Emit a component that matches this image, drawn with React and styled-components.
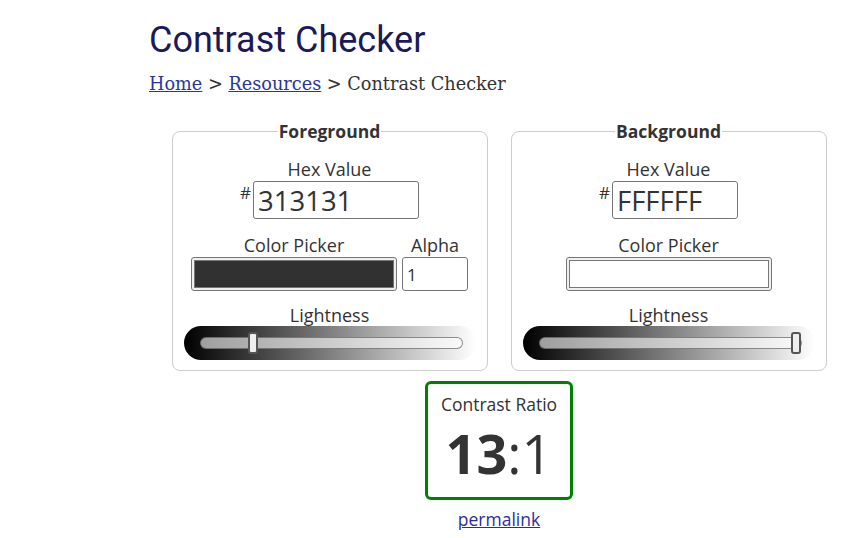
import React from "react";
import styled, { createGlobalStyle } from "styled-components";

const GlobalStyle = createGlobalStyle`
  body {
    margin: 0;
    background: #fff;
    font-family: "Open Sans", "Liberation Sans", sans-serif;
    color: #333;
  }
`;

const Page = styled.main`
  width: 700px;
  margin-left: 149px;
  padding-top: 16px;
`;

const Title = styled.h1`
  margin: 0;
  font-family: Roboto, "Liberation Sans", sans-serif;
  font-weight: 400;
  font-size: 36px;
  line-height: 48px;
  color: #1b1a57;
`;

const Crumbs = styled.nav`
  margin-top: 8px;
  font-family: "DejaVu Serif", "Liberation Serif", serif;
  font-size: 17.7px;
  line-height: 24px;
  color: #333;
`;

const CrumbLink = styled.a`
  color: #27379b;
  text-decoration: underline;
`;

const Panels = styled.div`
  display: flex;
  justify-content: center;
  gap: 23px;
  margin-top: 23px;
`;

const Panel = styled.fieldset`
  width: 316px;
  box-sizing: border-box;
  margin: 0;
  padding: 14px 11px 10px;
  border: 1px solid #ccc;
  border-radius: 8px;
  display: flex;
  flex-direction: column;
  align-items: center;
`;

const Legend = styled.legend`
  margin: 0 auto;
  padding: 0 1px;
  font-weight: 700;
  font-size: 17.5px;
  line-height: 24px;
  color: #333;
`;

const Label = styled.div`
  font-size: 18px;
  line-height: 24px;
  text-align: center;
  color: #333;
`;

const HexRow = styled.div`
  display: flex;
  align-items: flex-start;
`;

const Hash = styled.span`
  font-size: 17px;
  line-height: 17px;
  margin-top: 3px;
  margin-right: 2px;
`;

const HexInput = styled.input`
  width: ${(p) => p.$w}px;
  height: 38px;
  box-sizing: border-box;
  border: 1px solid #767676;
  border-radius: 3px;
  padding: 0 4px;
  font-family: "Open Sans", "Liberation Sans", sans-serif;
  font-size: 27.5px;
  color: #333;
  outline: none;
`;

const PickRow = styled.div`
  display: flex;
  gap: 5px;
  margin-top: 14px;
`;

const Column = styled.div`
  display: flex;
  flex-direction: column;
  align-items: center;
`;

const ColorInput = styled.input`
  width: 206px;
  height: 34px;
  box-sizing: border-box;
  padding: 2px;
  border: 1px solid #767676;
  border-radius: 3px;
  background: #efefef;
  cursor: pointer;
  &::-webkit-color-swatch-wrapper {
    padding: 0;
  }
  &::-webkit-color-swatch {
    border: 1px solid #777;
    border-radius: 0;
  }
`;

const AlphaInput = styled.input`
  width: 66px;
  height: 34px;
  box-sizing: border-box;
  border: 1px solid #767676;
  border-radius: 3px;
  padding: 0 4px;
  font-family: "Open Sans", "Liberation Sans", sans-serif;
  font-size: 17px;
  color: #333;
`;

const LightBlock = styled.div`
  margin-top: 12px;
  align-self: stretch;
  display: flex;
  flex-direction: column;
  align-items: center;
`;

const Gradient = styled.div`
  align-self: stretch;
  height: 34px;
  margin-top: -1px;
  border-radius: 17px;
  background: linear-gradient(to right, #000 0%, #fff 100%);
  display: flex;
  align-items: center;
  padding: 0 13px 0 16px;
`;

const Range = styled.input`
  -webkit-appearance: none;
  appearance: none;
  width: 100%;
  height: 24px;
  margin: 0;
  background: transparent;
  &::-webkit-slider-runnable-track {
    height: 12px;
    box-sizing: border-box;
    border: 1px solid rgba(70, 70, 70, 0.6);
    border-radius: 6px;
    background: rgba(255, 255, 255, 0.6);
  }
  &::-webkit-slider-thumb {
    -webkit-appearance: none;
    width: 10px;
    height: 22px;
    margin-top: -6px;
    box-sizing: border-box;
    background: #eee;
    border: 2px solid #555;
    border-radius: 3px;
  }
`;

const Result = styled.section`
  display: flex;
  flex-direction: column;
  align-items: center;
  margin-top: 10px;
`;

const RatioBox = styled.div`
  width: 148px;
  height: 119px;
  box-sizing: border-box;
  border: 3px solid #008000;
  border-radius: 6px;
  display: flex;
  flex-direction: column;
  align-items: center;
  padding-top: 8px;
`;

const RatioLabel = styled.div`
  font-size: 17.5px;
  line-height: 24px;
`;

const Ratio = styled.div`
  font-size: 54px;
  line-height: 74px;
  color: #333;
  b {
    font-weight: 700;
  }
`;

const Permalink = styled.a`
  margin-top: 7px;
  font-size: 17.5px;
  line-height: 24px;
  color: #2c2c9e;
  text-decoration: underline;
`;

function Lightness({ value }) {
  return (
    <LightBlock>
      <Label>Lightness</Label>
      <Gradient>
        <Range type="range" min="0" max="100" defaultValue={value} />
      </Gradient>
    </LightBlock>
  );
}

export default function App() {
  return (
    <Page>
      <GlobalStyle />
      <Title>Contrast Checker</Title>
      <Crumbs>
        <CrumbLink href="#">Home</CrumbLink> &gt; <CrumbLink href="#">Resources</CrumbLink> &gt; Contrast Checker
      </Crumbs>

      <Panels>
        <Panel>
          <Legend>Foreground</Legend>
          <Label>Hex Value</Label>
          <HexRow>
            <Hash>#</Hash>
            <HexInput $w={166} defaultValue="313131" />
          </HexRow>
          <PickRow>
            <Column>
              <Label>Color Picker</Label>
              <ColorInput type="color" defaultValue="#313131" />
            </Column>
            <Column>
              <Label>Alpha</Label>
              <AlphaInput defaultValue="1" />
            </Column>
          </PickRow>
          <Lightness value={19.2} />
        </Panel>

        <Panel>
          <Legend>Background</Legend>
          <Label>Hex Value</Label>
          <HexRow>
            <Hash>#</Hash>
            <HexInput $w={126} defaultValue="FFFFFF" />
          </HexRow>
          <PickRow>
            <Column>
              <Label>Color Picker</Label>
              <ColorInput type="color" defaultValue="#ffffff" />
            </Column>
          </PickRow>
          <Lightness value={100} />
        </Panel>
      </Panels>

      <Result>
        <RatioBox>
          <RatioLabel>Contrast Ratio</RatioLabel>
          <Ratio>
            <b>13</b>:1
          </Ratio>
        </RatioBox>
        <Permalink href="#">permalink</Permalink>
      </Result>
    </Page>
  );
}
